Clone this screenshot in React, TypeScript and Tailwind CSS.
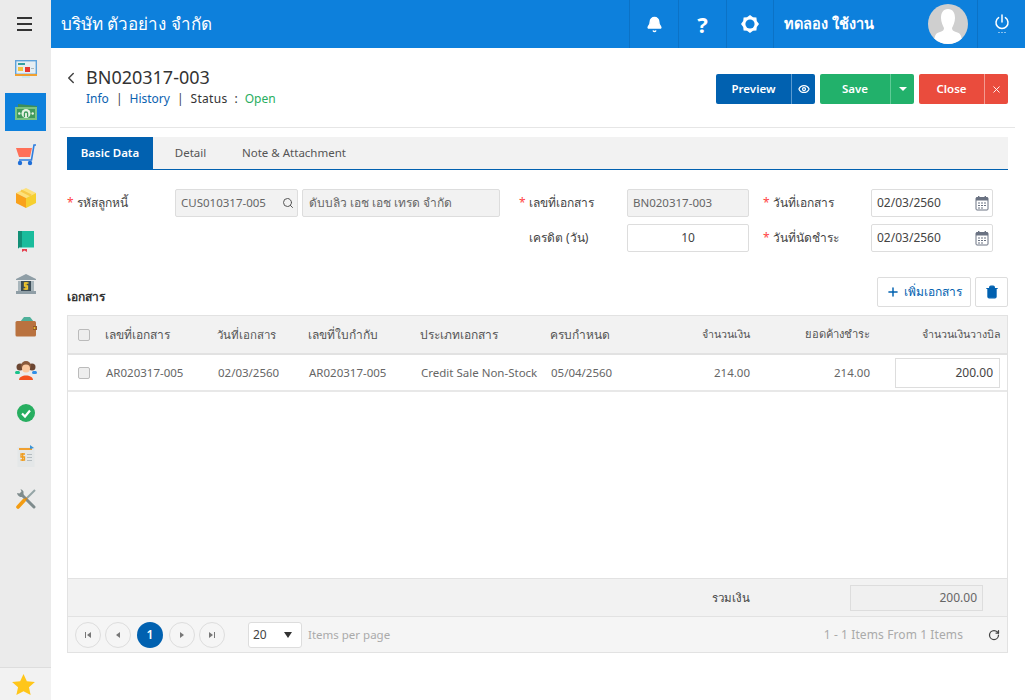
import { Bell, ChevronLeft, Eye, Plus, RotateCw, Search, Trash2, X } from "lucide-react"

const font = { fontFamily: '"Noto Sans", "DejaVu Sans", sans-serif' }

function Monitor() {
  return (
    <svg width="22" height="19" viewBox="0 0 22 19">
      <rect x="0.7" y="0.7" width="20.6" height="13.6" fill="#e6eef2" stroke="#5fa3dc" strokeWidth="1.4" />
      <rect x="0" y="14" width="22" height="2" fill="#f0a030" />
      <rect x="7" y="16" width="8" height="2" fill="#cfe8ee" />
      <rect x="3" y="3" width="7" height="2" fill="#35a0a0" />
      <rect x="3" y="7" width="5" height="4" fill="#f5c440" />
      <rect x="10" y="7" width="5" height="5" fill="#e53935" />
      <rect x="16" y="8" width="3" height="1" fill="#a8b8c0" />
    </svg>
  )
}

function Money() {
  return (
    <svg width="22" height="17" viewBox="0 0 22 17">
      <path d="M3 0 L22 2 V8 H3 Z" fill="#3e8e58" />
      <rect x="0" y="3" width="22" height="13" fill="#79c383" />
      <rect x="2" y="5" width="18" height="9" fill="#3f9a5c" />
      <circle cx="11" cy="9.5" r="4.5" fill="#e8f3e4" />
      <path d="M9.4 13 V9.6 a1.6 1.6 0 0 1 3.2 0 V13" fill="none" stroke="#3f9a5c" strokeWidth="1.3" />
      <circle cx="4.3" cy="9.5" r="1.2" fill="#e8f3e4" />
      <circle cx="17.7" cy="9.5" r="1.2" fill="#e8f3e4" />
    </svg>
  )
}

function Cart() {
  return (
    <svg width="22" height="22" viewBox="0 0 22 22">
      <path d="M1 4 H17 L15 13 H4 Z" fill="#ff7058" />
      <path d="M21 1 H19 L16.5 16 H4" fill="none" stroke="#2f7fe0" strokeWidth="1.6" />
      <circle cx="5" cy="19" r="2.2" fill="#1f6fd8" />
      <circle cx="15" cy="19" r="2.2" fill="#1f6fd8" />
    </svg>
  )
}

function Box() {
  return (
    <svg width="22" height="22" viewBox="0 0 22 22">
      <path d="M11 1 L21 6 L11 11 L1 6 Z" fill="#fde17a" />
      <path d="M1 6 L11 11 V21 L1 16 Z" fill="#f9a11b" />
      <path d="M21 6 L11 11 V21 L21 16 Z" fill="#f6cf2e" />
      <path d="M6 3.5 L16 8.5" stroke="#f7c948" strokeWidth="2.5" />
    </svg>
  )
}

function BookIcon() {
  return (
    <svg width="16" height="21" viewBox="0 0 16 21">
      <path d="M2 0 H16 V18 H2 a2 2 0 0 1 -2 -2 V2 a2 2 0 0 1 2 -2 Z" fill="#1abc9c" />
      <rect x="0" y="0" width="4" height="17" fill="#128f76" />
      <rect x="1" y="16.5" width="15" height="1.5" fill="#dff3ee" />
      <path d="M4 18 H9 V21 L6.5 19.5 L4 21 Z" fill="#e5404f" />
    </svg>
  )
}

function Bank() {
  return (
    <svg width="22" height="21" viewBox="0 0 22 21">
      <path d="M11 0 L21 5 V6 H1 V5 Z" fill="#8f9ea6" />
      <rect x="3" y="7" width="3" height="10" fill="#a9b6bc" />
      <rect x="16" y="7" width="3" height="10" fill="#a9b6bc" />
      <rect x="6" y="7" width="10" height="10" fill="#3d4d57" />
      <rect x="1" y="17" width="20" height="3" fill="#8f9ea6" />
      <path d="M13.5 9 H9.5 V12 H12.5 V15 H8.5 M11 8 V16" fill="none" stroke="#f3c72c" strokeWidth="1.3" />
    </svg>
  )
}

function Wallet() {
  return (
    <svg width="22" height="20" viewBox="0 0 22 20">
      <path d="M5 5 L9 0 H15 L19 5 Z" fill="#4fb09a" />
      <rect x="0.5" y="4" width="20.5" height="15.5" rx="1.5" fill="#b9723f" />
      <rect x="18" y="9" width="4" height="4" fill="#94582d" />
      <circle cx="19.5" cy="11" r="1" fill="#f3c72c" />
    </svg>
  )
}

function People() {
  return (
    <svg width="22" height="19" viewBox="0 0 22 19">
      <circle cx="5" cy="6" r="3.5" fill="#6b4632" />
      <circle cx="17" cy="6" r="3.5" fill="#6b4632" />
      <rect x="0" y="10" width="5" height="3" rx="1.5" fill="#18c28a" />
      <rect x="17" y="10" width="5" height="3" rx="1.5" fill="#2f8fe8" />
      <circle cx="11" cy="5" r="5" fill="#8a5a3c" />
      <circle cx="11" cy="7.5" r="4" fill="#fbc9a0" />
      <path d="M4 19 C4 13 18 13 18 19 Z" fill="#f4511e" />
    </svg>
  )
}

function Check() {
  return (
    <svg width="18" height="18" viewBox="0 0 18 18">
      <circle cx="9" cy="9" r="9" fill="#27ae60" />
      <path d="M5 9.5 L8 12.5 L13 6.5" fill="none" stroke="#fff" strokeWidth="2.2" />
    </svg>
  )
}

function Bill() {
  return (
    <svg width="18" height="22" viewBox="0 0 18 22">
      <rect x="0.5" y="2" width="17" height="20" fill="#e4e7e8" />
      <rect x="2" y="3" width="13" height="2" fill="#f0a030" />
      <path d="M13 0 L17 3 L13 4 Z" fill="#3a94d8" />
      <path d="M8 9 H4 V12 H7.5 V15 H3.5 M5.7 8 V16" fill="none" stroke="#ef9d1f" strokeWidth="1.3" />
      <rect x="10" y="9" width="5" height="1" fill="#b4bcc0" />
      <rect x="10" y="12" width="5" height="1" fill="#b4bcc0" />
      <rect x="10" y="15" width="5" height="1" fill="#b4bcc0" />
    </svg>
  )
}

function Tools() {
  return (
    <svg width="20" height="20" viewBox="0 0 20 20">
      <path d="M18 18 L6 6" stroke="#7f8c8d" strokeWidth="3" strokeLinecap="round" />
      <path d="M1 4 a4.5 4.5 0 0 0 6.5 3.5 l0 -5 a4.5 4.5 0 0 0 -3 -2.5 l1 2.6 -2 1.8 Z" fill="#7f8c8d" />
      <path d="M19 1 L11 9" stroke="#95a5a6" strokeWidth="2" />
      <path d="M11 9 L8.5 11.5" stroke="#c98a2b" strokeWidth="2" />
      <path d="M8 11.5 L2 18" stroke="#f39c12" strokeWidth="3.6" strokeLinecap="round" />
    </svg>
  )
}

function Gear() {
  return (
    <svg width="20" height="20" viewBox="0 0 20 20">
      <path d="M10 1 L13 3.2 L16.4 3.6 L16.8 7 L19 10 L16.8 13 L16.4 16.4 L13 16.8 L10 19 L7 16.8 L3.6 16.4 L3.2 13 L1 10 L3.2 7 L3.6 3.6 L7 3.2 Z" fill="#fff" />
      <circle cx="10" cy="10" r="4.6" fill="#0d80dc" />
    </svg>
  )
}

function PowerDots() {
  return (
    <svg width="16" height="20" viewBox="0 0 16 20" fill="none" stroke="#fff" strokeWidth="1.5">
      <path d="M4.6 3.6 a6 6 0 1 0 6.8 0" strokeLinecap="round" />
      <path d="M8 1 V8" strokeLinecap="round" />
      <path d="M4.5 18.5 H5.5 M7.5 18.5 H8.5 M10.5 18.5 H11.5" strokeWidth="1.2" />
    </svg>
  )
}

function Calendar() {
  return (
    <svg width="14" height="16" viewBox="0 0 14 16" className="text-gray-500">
      <rect x="1" y="2.5" width="12" height="12.5" rx="1" fill="none" stroke="currentColor" />
      <rect x="1" y="2.5" width="12" height="3" fill="currentColor" />
      <rect x="3" y="1" width="1.4" height="3" fill="currentColor" />
      <rect x="9.6" y="1" width="1.4" height="3" fill="currentColor" />
      <path d="M3 8 H5 M6 8 H8 M9 8 H11 M3 10.5 H5 M6 10.5 H8 M9 10.5 H11 M3 13 H5 M6 13 H8" stroke="currentColor" />
    </svg>
  )
}

function Avatar() {
  return (
    <svg width="40" height="40" viewBox="0 0 40 40" className="rounded-full">
      <rect width="40" height="40" fill="#cfcfcf" />
      <path d="M20 5 c5 0 7 4 7 9 c0 4 -2 8 -3 10 c0 2 1 3 4 4 c4 1 6 3 6 12 H6 c0 -9 2 -11 6 -12 c3 -1 4 -2 4 -4 c-1 -2 -3 -6 -3 -10 c0 -5 2 -9 7 -9 Z" fill="#fff" />
    </svg>
  )
}

const navIcons = [Monitor, Money, Cart, Box, BookIcon, Bank, Wallet, People, Check, Bill, Tools]

function Label({ text, required, className }: { text: string; required?: boolean; className: string }) {
  return (
    <div className={`flex shrink-0 items-center text-xs text-[#444] ${className}`}>
      <span className="w-[10px] text-[#f44] leading-none">{required ? "*" : ""}</span>
      {text}
    </div>
  )
}

function DateBox() {
  return (
    <div className="flex h-[28px] w-[122px] items-center justify-between rounded-[2px] border border-[#ddd] bg-white pl-[5px] pr-[3px] text-xs text-[#444]">
      02/03/2560
      <Calendar />
    </div>
  )
}

const cols = "grid grid-cols-[30px_112px_91px_112px_130px_112px_100px_120px_132px]"

const PagerBtn = ({ d }: { d: string }) => (
  <div className="flex h-[26px] w-[26px] items-center justify-center rounded-full border border-[#ddd]">
    <svg width="10" height="10" viewBox="0 0 10 10" fill="#777"><path d={d} /></svg>
  </div>
)

export default function App() {
  return (
    <div className="flex h-[700px] w-[1025px] overflow-hidden bg-white" style={font}>
      <aside className="flex w-[51px] shrink-0 flex-col bg-[#ebebeb]">
        <div className="flex h-[48px] shrink-0 flex-col items-center justify-center gap-[4px] pr-[2px]">
          <span className="h-[2px] w-[15px] bg-[#333]" />
          <span className="h-[2px] w-[15px] bg-[#333]" />
          <span className="h-[2px] w-[15px] bg-[#333]" />
        </div>
        <nav className="mt-[2px] flex flex-1 flex-col gap-[5px] pl-[5px]">
          {navIcons.map((Icon, i) => (
            <div key={i} className={`flex h-[38px] w-[41px] items-center justify-center ${i === 1 ? "bg-[#0d80dc]" : ""}`}>
              <Icon />
            </div>
          ))}
        </nav>
        <div className="flex h-[33px] items-center justify-center border-t border-[#ddd] bg-[#f2f2f2] pr-[5px]">
          <svg width="23" height="21" viewBox="0 0 24 22" fill="#ffc61a"><path d="M12 0 L15.5 7.5 L24 8.5 L17.7 14 L19.5 22 L12 18 L4.5 22 L6.3 14 L0 8.5 L8.5 7.5 Z" /></svg>
        </div>
      </aside>

      <div className="flex min-w-0 flex-1 flex-col">
        <header className="flex h-[48px] shrink-0 items-center bg-[#0d80dc] text-white">
          <div className="flex-1 pl-[10px] text-[17px]">บริษัท ตัวอย่าง จำกัด</div>
          <div className="flex h-full w-[49px] items-center justify-center border-l border-[#0b72c6]"><Bell size={17} fill="#fff" /></div>
          <div className="flex h-full w-[48px] items-center justify-center border-l border-[#0b72c6] text-[22px] font-bold">?</div>
          <div className="flex h-full w-[47px] items-center justify-center border-l border-[#0b72c6]"><Gear /></div>
          <div className="flex h-full w-[204px] items-center justify-between border-l border-[#0b72c6] pl-[10px] pr-[9px] text-[14.5px] font-bold">
            ทดลอง ใช้งาน
            <Avatar />
          </div>
          <div className="flex h-full w-[48px] items-center justify-center border-l border-[#0b72c6]"><PowerDots /></div>
        </header>

        <main className="flex flex-1 flex-col pl-[9px] pr-[10px]">
          <div className="flex h-[80px] items-start justify-between border-b border-[#e6e6e6] pr-[7px] pt-[16px]">
            <div className="flex pl-[2px]">
              <ChevronLeft size={18} className="mt-[5px] text-[#444]" />
              <div className="ml-[6px]">
                <div className="text-[18px] leading-[26px] text-[#333]">BN020317-003</div>
                <div className="flex items-center gap-[7px] text-xs leading-[18px]">
                  <span className="text-[#0b62b0]">Info</span>
                  <span className="text-[#444]">|</span>
                  <span className="text-[#0b62b0]">History</span>
                  <span className="text-[#444]">|</span>
                  <span className="tracking-[0.3px] text-[#333]">Status</span>
                  <span className="text-[#333]">:</span>
                  <span className="text-[#27ae60]">Open</span>
                </div>
              </div>
            </div>
            <div className="mt-[10px] flex h-[30px] text-[11.5px] font-semibold text-white">
              <div className="flex w-[75px] items-center justify-center rounded-l-[2px] bg-[#0161b0]">Preview</div>
              <div className="flex w-[24px] items-center justify-center rounded-r-[2px] border-l border-[#5a9ad0] bg-[#0161b0]"><Eye size={12} strokeWidth={2.5} /></div>
              <div className="ml-[5px] flex w-[70px] items-center justify-center rounded-l-[2px] bg-[#22b16b]">Save</div>
              <div className="flex w-[24px] items-center justify-center rounded-r-[2px] border-l border-[#5fcb96] bg-[#22b16b]">
                <span className="h-0 w-0 border-x-[4px] border-t-[4px] border-x-transparent border-t-white" />
              </div>
              <div className="ml-[5px] flex w-[65px] items-center justify-center rounded-l-[2px] bg-[#ea4c3d]">Close</div>
              <div className="flex w-[24px] items-center justify-center rounded-r-[2px] border-l border-[#f39a90] bg-[#ea4c3d]"><X size={11} /></div>
            </div>
          </div>

          <div className="mx-[7px] mt-[9px] flex h-[33px] border-b border-[#0161b0] bg-[#f2f2f2] text-[11.5px] text-[#555]">
            <div className="flex w-[86px] items-center justify-center bg-[#0161b0] font-semibold text-white">Basic Data</div>
            <div className="flex w-[75px] items-center justify-center">Detail</div>
            <div className="flex items-center pl-[14px]">Note &amp; Attachment</div>
          </div>

          <div className="mx-[7px] mt-[19px] flex flex-col gap-[7px]">
            <div className="flex h-[28px]">
              <Label required text="รหัสลูกหนี้" className="w-[108px]" />
              <div className="flex h-full w-[123px] items-center justify-between rounded-[2px] border border-[#ddd] bg-[#f2f2f2] pl-[5px] pr-[3px] text-[11.5px] text-[#666]">
                CUS010317-005
                <Search size={12} className="text-[#555]" />
              </div>
              <div className="ml-[4px] flex h-full w-[198px] items-center rounded-[2px] border border-[#ddd] bg-[#f2f2f2] pl-[6px] text-xs text-[#666]">ดับบลิว เอช เอช เทรด จำกัด</div>
              <Label required text="เลขที่เอกสาร" className="ml-[19px] w-[108px]" />
              <div className="flex h-full w-[122px] items-center rounded-[2px] border border-[#ddd] bg-[#f2f2f2] pl-[5px] text-[11.5px] text-[#666]">BN020317-003</div>
              <Label required text="วันที่เอกสาร" className="ml-[14px] w-[108px]" />
              <DateBox />
            </div>
            <div className="flex h-[28px]">
              <Label text="เครดิต (วัน)" className="ml-[452px] w-[108px]" />
              <div className="flex h-full w-[122px] items-center justify-center rounded-[2px] border border-[#ddd] bg-white text-xs text-[#444]">10</div>
              <Label required text="วันที่นัดชำระ" className="ml-[14px] w-[108px]" />
              <DateBox />
            </div>
          </div>

          <div className="mx-[7px] mt-[25px] flex h-[30px] items-center justify-between">
            <div className="mt-[9px] text-xs font-semibold text-[#333]">เอกสาร</div>
            <div className="flex gap-[4px]">
              <div className="flex h-[30px] w-[94px] items-center justify-center gap-[4px] rounded-[2px] border border-[#ddd] text-xs text-[#0161b0]">
                <Plus size={14} strokeWidth={2.5} />
                เพิ่มเอกสาร
              </div>
              <div className="flex h-[30px] w-[33px] items-center justify-center rounded-[2px] border border-[#ddd]">
                <Trash2 size={14} fill="#0161b0" className="text-[#0161b0]" />
              </div>
            </div>
          </div>

          <div className="mx-[7px] mt-[8px] flex h-[338px] flex-col border border-[#e2e2e2] text-xs text-[#666]">
            <div className={`${cols} h-[39px] shrink-0 items-center border-b-2 border-[#e2e2e2] bg-[#f2f2f2] text-[#555]`}>
              <div className="flex justify-center pl-[2px]"><span className="h-[12px] w-[12px] rounded-[2px] border border-[#bbb] bg-[#eee]" /></div>
              <div className="pl-[7px]">เลขที่เอกสาร</div>
              <div className="pl-[7px] text-[11.5px]">วันที่เอกสาร</div>
              <div className="pl-[7px]">เลขที่ใบกำกับ</div>
              <div className="pl-[7px]">ประเภทเอกสาร</div>
              <div className="pl-[7px]">ครบกำหนด</div>
              <div className="pr-[5px] text-right text-[10.7px]">จำนวนเงิน</div>
              <div className="pr-[5px] text-right text-[11.2px]">ยอดค้างชำระ</div>
              <div className="pr-[6px] text-right text-[10.7px]">จำนวนเงินวางบิล</div>
            </div>
            <div className={`${cols} h-[37px] shrink-0 items-center border-b-2 border-[#e8e8e8] text-[11.5px]`}>
              <div className="flex justify-center pl-[2px]"><span className="h-[12px] w-[12px] rounded-[2px] border border-[#bbb] bg-[#eee]" /></div>
              <div className="pl-[8px]">AR020317-005</div>
              <div className="pl-[8px]">02/03/2560</div>
              <div className="pl-[8px]">AR020317-005</div>
              <div className="pl-[8px]">Credit Sale Non-Stock</div>
              <div className="pl-[8px]">05/04/2560</div>
              <div className="pr-[5px] text-right">214.00</div>
              <div className="pr-[5px] text-right">214.00</div>
              <div className="ml-[20px] mr-[7px] flex h-[30px] items-center justify-end border border-[#ddd] bg-white pr-[6px] text-xs text-[#444]">200.00</div>
            </div>
            <div className="flex-1" />
            <div className="flex h-[39px] shrink-0 items-center justify-end border-y border-[#e2e2e2] bg-[#f2f2f2] pr-[24px]">
              <span className="mr-[100px] text-[11.5px] text-[#444]">รวมเงิน</span>
              <div className="flex h-[26px] w-[133px] items-center justify-end border border-[#ddd] bg-[#f0f0f0] pr-[5px] text-[#666]">200.00</div>
            </div>
            <div className="flex h-[35px] shrink-0 items-center bg-[#f5f5f5] pl-[7px] pr-[7px]">
              <div className="flex items-center gap-[4px]">
                <PagerBtn d="M2 2 H3 V8 H2 Z M8 2 V8 L4 5 Z" />
                <PagerBtn d="M7 2 V8 L3 5 Z" />
                <div className="mx-[2px] flex h-[26px] w-[26px] items-center justify-center rounded-full bg-[#0161b0] font-semibold text-white">1</div>
                <PagerBtn d="M3 2 V8 L7 5 Z" />
                <PagerBtn d="M2 2 V8 L6 5 Z M7 2 H8 V8 H7 Z" />
              </div>
              <div className="ml-[23px] flex h-[26px] w-[54px] items-center justify-between rounded-[3px] border border-[#ddd] bg-white pl-[4px] pr-[9px] text-[#444]">
                20
                <span className="h-0 w-0 border-x-[4px] border-t-[6px] border-x-transparent border-t-[#333]" />
              </div>
              <span className="ml-[6px] text-[11.5px] text-[#aaa]">Items per page</span>
              <span className="ml-auto tracking-[0.1px] text-[#aaa]">1 - 1 Items From 1 Items</span>
              <RotateCw size={12} strokeWidth={2.5} className="ml-[25px] text-[#444]" />
            </div>
          </div>
        </main>
      </div>
    </div>
  )
}
